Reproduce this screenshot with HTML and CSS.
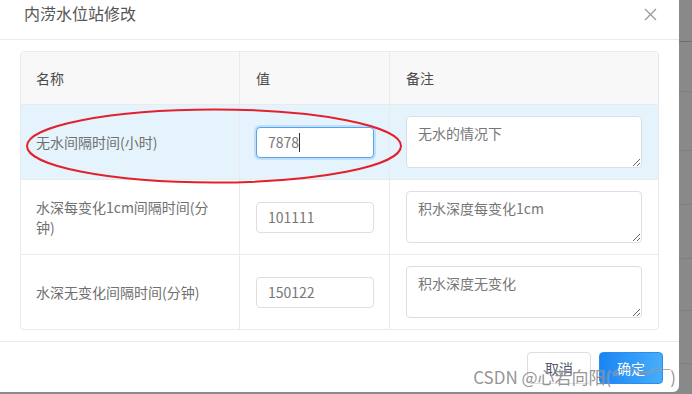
FILE: index.html
```html
<!DOCTYPE html>
<html lang="zh-CN">
<head>
    <meta charset="UTF-8">
    <meta name="viewport" content="width=device-width, initial-scale=1.0">
    <title>内涝水位站修改</title>
    <link rel="stylesheet" href="styles.css">
</head>
<body>

<!-- Dialog -->
<div class="modal">
    <div class="modal-header">
        <div class="modal-title">内涝水位站修改</div>
        <svg class="modal-close" width="13" height="13" viewBox="0 0 13 13">
            <path d="M1 1 L12 12 M12 1 L1 12" stroke="#999" stroke-width="1.3" fill="none"/>
        </svg>
    </div>

    <div class="modal-body">
        <div class="param-table">
            <div class="cell head col-name">名称</div>
            <div class="cell head col-value">值</div>
            <div class="cell head col-note">备注</div>

            <div class="cell col-name active">无水间隔时间(小时)</div>
            <div class="cell col-value active">
                <div class="input-wrap">
                    <input class="value-input focused" type="text" value="7878">
                    <span class="caret"></span>
                </div>
            </div>
            <div class="cell col-note active">
                <textarea class="note-input">无水的情况下</textarea>
            </div>

            <div class="cell col-name">水深每变化1cm间隔时间(分钟)</div>
            <div class="cell col-value">
                <input class="value-input" type="text" value="101111">
            </div>
            <div class="cell col-note">
                <textarea class="note-input">积水深度每变化1cm</textarea>
            </div>

            <div class="cell col-name last">水深无变化间隔时间(分钟)</div>
            <div class="cell col-value last">
                <input class="value-input" type="text" value="150122">
            </div>
            <div class="cell col-note last">
                <textarea class="note-input">积水深度无变化</textarea>
            </div>
        </div>
    </div>

    <div class="modal-footer">
        <button class="btn">取消</button>
        <button class="btn btn-primary">确定</button>
    </div>

    <!-- hand-drawn annotation on top of the screenshot -->
    <svg class="mark" width="380" height="78" viewBox="0 0 380 78">
        <ellipse cx="189" cy="38" rx="187" ry="36.5" stroke="#e3202b" stroke-width="2" fill="none"/>
    </svg>

    <div class="watermark">CSDN @心若向阳(*￣︶￣)</div>
</div>

<!-- page behind the mask -->
<div class="backdrop">
    <div></div>
    <div class="dark"></div>
    <div></div>
    <div></div>
    <div></div>
    <div></div>
    <div></div>
    <div></div>
</div>

</body>
</html>
```

FILE: styles.css
```css
body {
    font-family: "Noto Sans CJK SC", "Noto Sans", sans-serif;
    background-color: #898989; /* mask */
    margin: 0;
    padding: 0;
    display: flex;
    height: 394px;
    overflow: hidden;
}

/* Dialog */
.modal {
    width: 679px;
    height: 392px;
    flex-shrink: 0;
    background-color: #fff;
    border-bottom-right-radius: 6px;
    display: flex;
    flex-direction: column;
    position: relative;
}

.modal-header {
    height: 40px;
    box-sizing: border-box;
    padding: 3px 22px 0 24px;
    border-bottom: 1px solid #e8eaec;
    display: flex;
    justify-content: space-between;
    align-items: flex-start;
}

.modal-title {
    font-size: 16px;
    line-height: 20px;
    color: #555;
}

.modal-close {
    margin-top: 5px;
}

.modal-body {
    padding: 11px 20px 11px 20px;
}

/* Parameter table */
.param-table {
    display: grid;
    grid-template-columns: 219px 150px 1fr;
    grid-template-rows: 53px 75px 75px 74px;
    border: 1px solid #e8eaec;
    border-radius: 4px;
    overflow: hidden;
}

.cell {
    display: flex;
    align-items: center;
    border-bottom: 1px solid #e8eaec;
    font-size: 14px;
    line-height: 20px;
    color: #707070;
}

.cell.last {
    border-bottom: none;
}

.col-name {
    padding: 0 22px 0 15px;
    border-right: 1px solid #e8eaec;
}

.col-value {
    padding: 0 15px 0 16px;
    border-right: 1px solid #e8eaec;
}

.col-note {
    padding: 0 16px;
}

.cell.head {
    background-color: #f8f8f9;
    color: #4a4a4a;
}

.cell.active {
    background-color: #e5f4fc; /* hovered row */
}

.input-wrap {
    position: relative;
}

.value-input {
    width: 118px;
    height: 31px;
    box-sizing: border-box;
    padding: 0 11px;
    border: 1px solid #dcdee2;
    border-radius: 4px;
    font-family: inherit;
    font-size: 14px;
    color: #777;
    background-color: #fff;
    outline: none;
}

.value-input.focused {
    border-color: #57a3f3;
    box-shadow: 0 0 0 2px rgba(45, 140, 240, 0.2);
}

.caret {
    position: absolute;
    left: 43px;
    top: 6px;
    width: 1px;
    height: 19px;
    background-color: #333;
}

.note-input {
    width: 100%;
    height: 52px;
    box-sizing: border-box;
    padding: 6px 11px;
    border: 1px solid #dcdee2;
    border-radius: 4px;
    font-family: inherit;
    font-size: 14px;
    line-height: 20px;
    color: #777;
    background-color: #fff;
    outline: none;
}

/* Footer */
.modal-footer {
    border-top: 1px solid #e8eaec;
    padding: 10px 16px 0 0;
    flex-grow: 1;
    display: flex;
    justify-content: flex-end;
    align-items: flex-start;
    gap: 8px;
}

.btn {
    height: 32px;
    padding: 0 17px;
    border: 1px solid #dcdee2;
    border-radius: 4px;
    background-color: #fff;
    font-family: inherit;
    font-size: 14px;
    color: #515a6e;
}

.btn-primary {
    border-color: #2d8cf0;
    background: linear-gradient(to right, #1985f5, #48adf8);
    color: #fff;
}

/* Annotation and watermark */
.mark {
    position: absolute;
    left: 25px;
    top: 108px;
}

.watermark {
    position: absolute;
    right: 3px;
    bottom: 5px;
    font-size: 17px;
    line-height: 20px;
    color: rgba(120, 120, 120, 0.8);
    text-shadow: 0 0 1px rgba(255, 255, 255, 0.6);
    white-space: nowrap;
}

/* Page behind the mask */
.backdrop {
    flex-grow: 1;
    display: grid;
    grid-template-rows: 41px 50px 59px 54px 54px 52px 53px 1fr;
}

.backdrop div + div {
    border-top: 1px solid #7f7f7f;
}

.backdrop .dark {
    border-top-color: #6e6e6e;
}
```
